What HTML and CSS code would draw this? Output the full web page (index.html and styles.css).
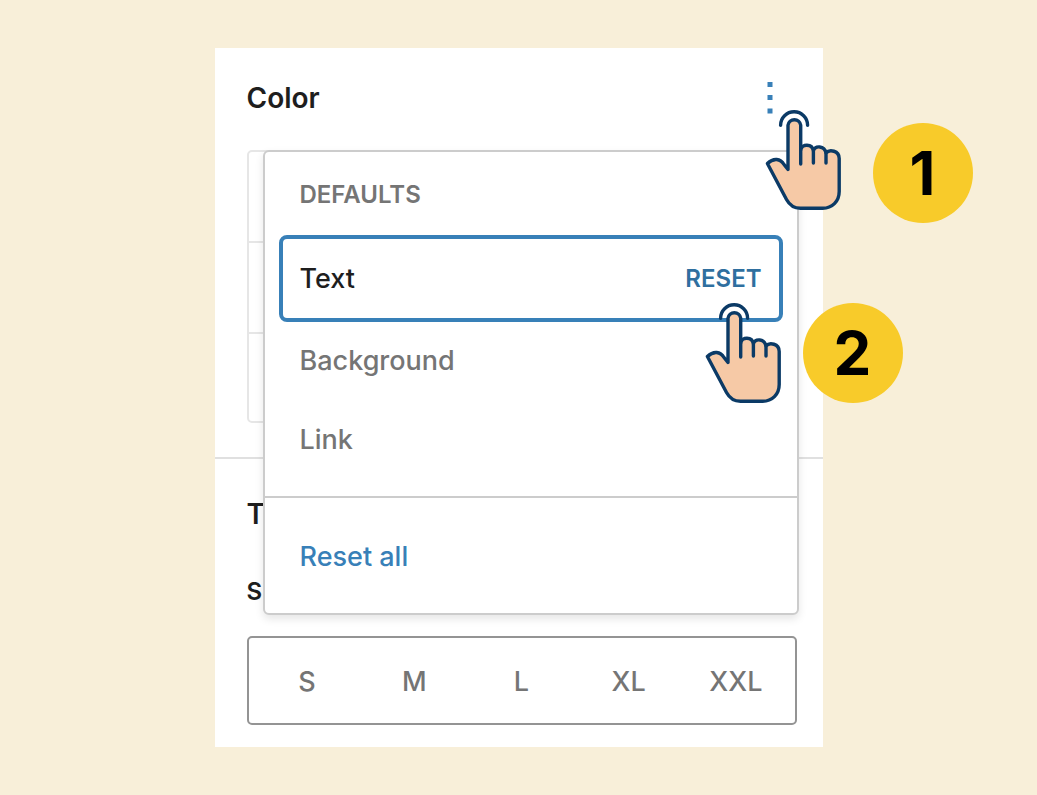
FILE: index.html
```html
<!DOCTYPE html>
<html lang="en">
<head>
<meta charset="utf-8">
<meta name="viewport" content="width=device-width, initial-scale=1">
<title>Reset a block color</title>
<link rel="stylesheet" href="styles.css">
</head>
<body>
<svg class="sprite" aria-hidden="true">
  <symbol id="hand" viewBox="0 0 78 102">
    <path class="hand-fill" d="M23 60.5V16.3a6.4 6.4 0 0 1 12.7 0V41c1-6.500 11.500-6.500 12.700.8 1.800-5.500 11-5.500 12.600 2.200C64.500 40 74.200 41.500 74.200 49.500V82.500C74.200 92.500 67 99.300 57.700 99.300H35.500C29 99.300 24.500 96 21.500 90.500L2.400 54.500C8.500 48.500 15.500 49.500 19 55.500Z"/>
    <path class="hand-line" d="M35.700 55V41M48.400 54V42M61 54V44M15.600 16.300a13.500 13.500 0 0 1 27 0"/>
  </symbol>
</svg>
<main class="stage">
  <div class="panel">
    <section class="section">
      <header class="section-header">
        <h2 class="heading">Color</h2>
        <button class="more" type="button" aria-label="Color options" aria-expanded="true">
          <svg class="more-icon" viewBox="0 0 6 34" aria-hidden="true"><path d="M0.500 1h5v5h-5zM0.500 14h5v5h-5zM0.500 27.500h5v5h-5z"/></svg>
        </button>
      </header>
      <div class="swatches">
        <div class="swatch"></div>
        <div class="swatch"></div>
        <div class="swatch"></div>
      </div>
    </section>
    <section class="section typography">
      <h2 class="heading">Typography</h2>
      <h3 class="subheading">SIZE</h3>
      <div class="sizes">
        <button class="size" type="button">S</button>
        <button class="size" type="button">M</button>
        <button class="size" type="button">L</button>
        <button class="size" type="button">XL</button>
        <button class="size" type="button">XXL</button>
      </div>
    </section>
    <div class="menu">
      <div class="menu-group">
        <div class="menu-label">DEFAULTS</div>
        <button class="item item-focused" type="button"><span>Text</span><span class="reset">RESET</span></button>
        <button class="item" type="button">Background</button>
        <button class="item" type="button">Link</button>
      </div>
      <div class="menu-footer">
        <button class="item item-link" type="button">Reset all</button>
      </div>
    </div>
    <svg class="pointer pointer-one" aria-hidden="true"><use href="#hand"/></svg>
    <svg class="pointer pointer-two" aria-hidden="true"><use href="#hand"/></svg>
    <div class="step step-one">1</div>
    <div class="step step-two">2</div>
  </div>
</main>
</body>
</html>
```
FILE: styles.css
```css
* {
  box-sizing: border-box;
}

body {
  margin: 0;
  background: #f8efd9;
  color: #1e1e1e;
  font-family: Inter, "Liberation Sans", sans-serif;
  font-size: 27px;
  line-height: 32px;
}

button {
  margin: 0;
  padding: 0;
  border: 0;
  background: none;
  color: inherit;
  font: inherit;
}

.sprite {
  display: none;
}

.stage {
  display: flex;
  justify-content: center;
  padding: 48px 24px;
}

.panel {
  position: relative;
  width: 100%;
  max-width: 608px;
  background: #fff;
}

.section {
  padding: 0 26px 34px 32px;
  border-bottom: 2px solid #e0e0e0;
}

.section-header {
  display: flex;
  align-items: center;
  justify-content: space-between;
  height: 102px;
  padding: 0 12px 2px 0;
}

.heading {
  margin: 0;
  font-size: 28px;
  font-weight: 600;
}

.more {
  display: flex;
  justify-content: center;
  width: 30px;
}

.more-icon {
  width: 6px;
  height: 34px;
  fill: #3880b8;
}

.swatches {
  display: grid;
  grid-template-rows: 89px 91px 89px;
  border: 2px solid #e6e6e6;
  border-radius: 5px;
}

.swatch + .swatch {
  border-top: 2px solid #e6e6e6;
}

.typography {
  padding-top: 39px;
  padding-bottom: 22px;
  border-bottom: 0;
}

.subheading {
  margin: 46px 0 28px;
  font-size: 24px;
  font-weight: 600;
}

.sizes {
  display: grid;
  grid-template-columns: repeat(5, 1fr);
  padding: 0 5px;
  border: 2px solid #949494;
  border-radius: 5px;
}

.size {
  height: 85px;
  padding-top: 2px;
  color: #757575;
  font-weight: 500;
}

.menu {
  position: absolute;
  top: 102px;
  right: 24px;
  left: 48px;
  background: #fff;
  border: 2px solid #ccc;
  border-radius: 6px;
  box-shadow: 0 4px 8px rgba(0, 0, 0, 0.1);
}

.menu-group {
  padding: 0 14px 16px;
}

.menu-label {
  padding: 27px 21px 24px;
  color: #757575;
  font-size: 24px;
  font-weight: 600;
}

.item {
  display: flex;
  align-items: center;
  justify-content: space-between;
  width: 100%;
  height: 80px;
  padding: 0 21px;
  color: #757575;
  font-weight: 500;
}

.item-focused {
  height: 87px;
  padding: 0 17px;
  border: 4px solid #3880b8;
  border-radius: 8px;
  color: #1e1e1e;
}

.menu-group .item + .item {
  height: 79px;
  padding-bottom: 2px;
}

.reset {
  color: #2f6f9f;
  font-size: 24px;
  font-weight: 600;
}

.menu-footer {
  padding: 19px 14px 16px;
  border-top: 2px solid #ccc;
}

.item-link {
  color: #3880b8;
}

.pointer {
  position: absolute;
  width: 78px;
  height: 102px;
  stroke: #0b3a66;
  stroke-width: 3.400px;
  stroke-linecap: round;
  stroke-linejoin: round;
}

.pointer-one {
  top: 61px;
  left: 550px;
}

.pointer-two {
  top: 254px;
  left: 490px;
}

.hand-fill {
  fill: #f6c9a6;
}

.hand-line {
  fill: none;
}

.step {
  position: absolute;
  display: flex;
  align-items: center;
  justify-content: center;
  width: 100px;
  height: 100px;
  border-radius: 50%;
  background: #f8cb2a;
  color: #000;
  font-size: 60px;
  font-weight: 700;
}

.step-one {
  top: 75px;
  left: 658px;
}

.step-two {
  top: 255px;
  left: 588px;
}
```
